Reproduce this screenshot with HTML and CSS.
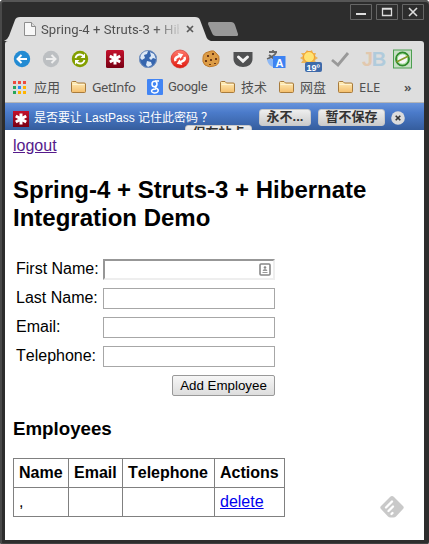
FILE: index.html
```html
<!DOCTYPE html>
<html lang="en">
<head>
<meta charset="utf-8">
<title>Spring-4 + Struts-3 + Hibernate</title>
<link rel="stylesheet" href="styles.css">
</head>
<body>
<svg class="defs" width="0" height="0">
  <defs>
    <linearGradient id="gold" x1="0" y1="0" x2="0" y2="1"><stop offset="0" stop-color="#fff0bd"/><stop offset="1" stop-color="#f4bd6a"/></linearGradient>
    <linearGradient id="red" x1="0" y1="0" x2="0" y2="1"><stop offset="0" stop-color="#c4102c"/><stop offset="1" stop-color="#780014"/></linearGradient>
    <linearGradient id="ball" x1="0" y1="0" x2="0" y2="1"><stop offset="0" stop-color="#ff7a6c"/><stop offset="1" stop-color="#e0190f"/></linearGradient>
    <g id="star" stroke="#fff" stroke-width="3" fill="none"><path d="M0-5.5V5.5M-5.2-3L5.2 3M-5.2 3L5.2-3"/></g>
    <g id="folder" stroke="#a87b3c" fill="url(#gold)"><path d="M.5 11.5V2.5Q.5 1.5 1.5 1.5H5L6.500 3H13Q14.500 3 14.500 4V11.500Q14.500 12.500 13.500 12.500H1.500Q.500 12.500.500 11.500Z"/><path d="M1.500 4.500H13.500" stroke="#fff2cf"/></g>
  </defs>
</svg>
<div class="window">
  <header class="titlebar">
    <div class="tab">
      <svg class="tab-shape" width="207" height="24" viewBox="0 0 207 24"><path d="M0 24Q4 22 5 19L11 3Q12 0 16 0H191Q195 0 196 3L202 19Q203 23 207 24Z" fill="#dedede"/></svg>
      <svg class="doc" width="12" height="14" viewBox="0 0 12 14"><path d="M.5.500H7.500L11.500 4.500V13.500H.500Z" fill="#f8f8f8" stroke="#8e8e8e"/><path d="M7.500.500V4.500H11.500" fill="#ddd" stroke="#8e8e8e"/></svg>
      <span class="tab-title">Spring-4 + Struts-3 + Hib</span>
      <svg class="tab-close" width="8" height="8" viewBox="0 0 8 8"><path d="M1 1L7 7M7 1L1 7" stroke="#595959" stroke-width="1.700"/></svg>
    </div>
    <svg class="newtab" width="31" height="14" viewBox="0 0 31 14"><path d="M1 0H23Q26 0 27 3L30 12Q30.500 14 28 14H8Q5 14 4 11L0 2Q0 0 1 0Z" fill="#999"/></svg>
    <div class="controls">
      <svg width="22" height="16" viewBox="0 0 22 16"><path d="M6 10H16" stroke="#ddd" stroke-width="2"/></svg>
      <svg width="22" height="16" viewBox="0 0 22 16"><path d="M6.500 4.500H15.500V11.500H6.500ZM6 5H16" fill="none" stroke="#ddd" stroke-width="1.300"/></svg>
      <svg width="22" height="16" viewBox="0 0 22 16"><path d="M7 4L15 12M15 4L7 12" stroke="#ddd" stroke-width="1.600"/></svg>
    </div>
  </header>

  <nav class="toolbar">
    <svg viewBox="0 0 24 24"><circle cx="12" cy="12" r="8.200" fill="#238bd3"/><path d="M17 12H8M11.500 8L7.500 12L11.500 16" fill="none" stroke="#fff" stroke-width="2"/></svg>
    <svg viewBox="0 0 24 24"><circle cx="12" cy="12" r="8.200" fill="#bcbfc2"/><path d="M7 12H16M12.500 8L16.500 12L12.500 16" fill="none" stroke="#eee" stroke-width="2"/></svg>
    <svg viewBox="0 0 24 24"><circle cx="12" cy="12" r="8.200" fill="#839f00"/><path d="M7.500 11Q8.500 7.500 12 7.500Q14 7.500 15.500 9M16.500 13Q15.500 16.500 12 16.500Q10 16.500 8.500 15" fill="none" stroke="#fff" stroke-width="1.800"/><path d="M17 6.500V11H12.500ZM7 17.500V13H11.500Z" fill="#fff"/></svg>
    <svg viewBox="0 0 24 24"><rect x="3" y="3" width="18" height="18" rx="1.500" fill="url(#red)"/><use href="#star" x="12" y="12"/></svg>
    <svg viewBox="0 0 24 24"><circle cx="12" cy="12" r="8.800" fill="#3565ae"/><path d="M5 7Q8 3 12 4L11 7L8 8L9 11L6 13L4 11ZM14 5L18 7L20 12L17 11L15 13L13 11L15 9ZM11 14L15 15L16 18L12 20L10 18Z" fill="#dce8f6"/><circle cx="12" cy="12" r="8.500" fill="none" stroke="#7894bf"/></svg>
    <svg viewBox="0 0 24 24"><circle cx="12" cy="12" r="9" fill="url(#ball)" stroke="#ce271e" stroke-width=".6"/><g transform="rotate(-25 12 12)"><path d="M7 12Q7 9 10.500 9H13M17 12Q17 15 13.500 15H11" fill="none" stroke="#fff" stroke-width="2.300"/><path d="M12.500 5.500L17 9L12.500 12ZM11.500 12L7 15L11.500 18.500Z" fill="#fff"/></g></svg>
    <svg viewBox="0 0 24 24"><path d="M12 4Q15 3 17 6Q21 9 20 13Q20 18 15 19Q10 21 6 18Q3 15 4 11Q4 6 9 5Z" fill="#dc9c46" stroke="#c07a2a"/><path d="M8 8H10V10H8ZM13 6H15V8H13ZM6 13H8V15H6ZM11 12H13V14H11ZM16 11H18V13H16ZM10 17H12V18H10ZM15 16H17V17H15Z" fill="#6e3916"/></svg>
    <svg viewBox="0 0 24 24"><path d="M2.500 5H21.500V12C21.500 17 17 20 12 20C7 20 2.500 17 2.500 12Z" fill="#505152"/><path d="M7.500 10L12 14.200L16.500 10" fill="none" stroke="#f2f2f2" stroke-width="3" stroke-linecap="round"/></svg>
    <svg viewBox="0 0 24 24"><path d="M5 5H13M9 3V6M12 6Q9 10 3 12M5 8Q9 12 14 13" fill="none" stroke="#666" stroke-width="1.800"/><path d="M3 13Q7 10 10 13V20Q5 20 3 13Z" fill="#8db8f5"/><rect x="9" y="9" width="12.500" height="12" fill="#3c82f2"/><text x="11.500" y="19.500" class="translate-a">A</text></svg>
    <svg viewBox="0 0 24 24"><path d="M9 3L11 5L14 3L15 6L18 6L17 9L20 11L17 13L18 16H3L5 13L2 11L5 9L3 6L7 6Z" fill="#eab457"/><circle cx="11" cy="10" r="5.500" fill="#ffe374" stroke="#f49c28"/><rect x="7" y="15" width="17" height="10" rx="2" fill="#3e6aaa"/><text x="8.500" y="23.500" class="temperature">19º</text></svg>
    <svg viewBox="0 0 24 24"><path d="M4 13L10 18L20 6" fill="none" stroke="#999" stroke-width="2.800"/></svg>
    <svg viewBox="0 0 24 24"><text x="3" y="19" class="jb"><tspan fill="#e2c8ae">J</tspan><tspan fill="#b0cbdc">B</tspan></text></svg>
    <svg viewBox="0 0 24 24"><rect x="3.500" y="3" width="18" height="18" fill="#c8dfc6" stroke="#4c9f50"/><circle cx="12.500" cy="12" r="6.500" fill="#f7f7f7" stroke="#2f8a2c" stroke-width="1.800"/><circle cx="12.500" cy="12" r="5.200" fill="none" stroke="#7cd070" stroke-width=".8"/><path d="M6.500 15L18.500 9" stroke="#8a9a2a" stroke-width="1.800"/></svg>
  </nav>

  <nav class="bookmarks">
    <svg class="apps" width="13" height="13" viewBox="0 0 13 13"><path d="M0 0H3V3H0ZM5 0H8V3H5ZM10 0H13V3H10Z" fill="#ed4b3c"/><path d="M0 5H3V8H0ZM0 10H3V13H0Z" fill="#26a65b"/><path d="M5 5H8V8H5Z" fill="#2889f4"/><path d="M10 5H13V8H10ZM5 10H8V13H5ZM10 10H13V13H10Z" fill="#ffb400"/></svg><span class="bm-apps">应用</span>
    <svg width="15" height="14"><use href="#folder"/></svg><span class="bm-info">GetInfo</span>
    <svg class="google" width="16" height="16" viewBox="0 0 16 16"><rect width="16" height="16" rx="1" fill="#4285f4"/><ellipse cx="7.500" cy="5" rx="2.500" ry="2.800" fill="none" stroke="#fff" stroke-width="1.500"/><path d="M8 2H12M9 7Q7 8 9 9Q12 10.500 11 12.500Q9.500 14.500 6.500 13.800Q3.500 13 5 11Q6 10 9 10" fill="none" stroke="#fff" stroke-width="1.400"/></svg><span class="bm-google">Google</span>
    <svg width="15" height="14"><use href="#folder"/></svg><span class="bm-tech">技术</span>
    <svg width="15" height="14"><use href="#folder"/></svg><span class="bm-disk">网盘</span>
    <svg width="15" height="14"><use href="#folder"/></svg><span class="bm-ele">ELE</span>
    <span class="more">»</span>
  </nav>

  <div class="notice">
    <svg class="lp" width="16" height="16" viewBox="0 0 16 16"><rect width="16" height="16" fill="url(#red)"/><use href="#star" x="8" y="8"/></svg>
    <span class="question">是否要让 LastPass 记住此密码<span class="mark">？</span></span>
    <span class="nbtn never">永不...</span>
    <span class="nbtn later">暂不保存</span>
    <svg class="dismiss" width="14" height="14" viewBox="0 0 14 14"><circle cx="7" cy="7" r="6.800" fill="#dcdcdc"/><path d="M4.700 4.700L9.300 9.300M9.300 4.700L4.700 9.300" stroke="#333" stroke-width="1.600"/></svg>
    <span class="nbtn overflow">保存站点</span>
  </div>

  <main>
    <a class="logout" href="#">logout</a>
    <h2>Spring-4 + Struts-3 + Hibernate<br>Integration Demo</h2>
    <form class="form">
      <label>First Name:</label><div class="field active"><svg width="12" height="13" viewBox="0 0 12 13"><rect x="1" y="1" width="10" height="11" rx="1" fill="#fff" stroke="#888" stroke-width="1.600"/><circle cx="6" cy="4.500" r="1.300" fill="#888"/><path d="M3.500 8Q4 6 6 6Q8 6 8.500 8ZM3.500 9H8.500V10H3.500Z" fill="#999"/></svg></div>
      <label>Last Name:</label><div class="field"></div>
      <label>Email:</label><div class="field"></div>
      <label>Telephone:</label><div class="field"></div>
      <button type="button">Add Employee</button>
    </form>
    <h3>Employees</h3>
    <table>
      <colgroup><col class="c-name"><col class="c-email"><col class="c-phone"><col class="c-actions"></colgroup>
      <tr><th>Name</th><th>Email</th><th>Telephone</th><th>Actions</th></tr>
      <tr><td>,</td><td></td><td></td><td><a href="#">delete</a></td></tr>
    </table>
    <svg class="feedly" width="24" height="22" viewBox="0 0 24 22"><path d="M10 1Q12-1 14 1L23 10Q24.500 11.500 23 13L16 20.500Q15 21.500 13.500 21.500H10.500Q9 21.500 8 20.500L1 13Q-.5 11.500 1 10Z" fill="#c9c9c9"/><path d="M6 11.500L12 5.500M8.500 15L13 10.500M11.500 18L12.500 17" stroke="#fff" stroke-width="2.300" stroke-linecap="round"/></svg>
  </main>
</div>
</body>
</html>
```
FILE: styles.css
```css
* { box-sizing: border-box; }
body { margin: 0; width: 429px; height: 544px; overflow: hidden; background: #fff; font-family: "Liberation Sans", "Noto Sans CJK SC", sans-serif; }
.defs { position: absolute; }
svg { display: block; flex: none; }
.window { width: 429px; height: 544px; padding: 0 4px 4px; background: #2d2d2d; border-radius: 4px 4px 2px 2px; box-shadow: inset 0 2px #565656, inset 2px 0 #494949, inset 0 -1px #414141; }
.titlebar { height: 41px; display: flex; align-items: flex-start; }
.tab { position: relative; width: 207px; height: 24px; margin-top: 17px; display: flex; padding: 5px 0 0 20px; }
.tab-shape { position: absolute; inset: 0; }
.doc, .tab-title, .tab-close { position: relative; }
.tab-title { width: 138px; height: 18px; margin-left: 5px; font: 13.1px/15px Roboto, sans-serif; letter-spacing: .05px; color: #505050; white-space: nowrap; -webkit-mask-image: linear-gradient(90deg, #000 113px, transparent 142px); }
.tab-close { margin: 3px 0 0 7px; }
.newtab { margin: 22px 0 0 -3px; }
.controls { display: flex; gap: 4px; margin: 4px 0 0 111px; }
.controls svg { box-shadow: inset 0 0 0 1px #666; border-radius: 1px; }
.toolbar { height: 32px; margin: 0 1px; padding: 6px 0 0 5px; display: grid; grid-template-columns: 29px 29px 35px 33px 32px 31px 32px 33px 34px 30px 31px 31px 24px; background: #dedede; border-radius: 3px 3px 0 0; }
.toolbar svg { width: 24px; height: 24px; overflow: visible; }
.translate-a { font: bold 11px "Liberation Sans", sans-serif; fill: #fff; }
.temperature { font: bold 9px "Liberation Sans", sans-serif; fill: #fff; }
.jb { font: bold 20px "Liberation Sans", sans-serif; letter-spacing: -1.5px; }
.bookmarks { height: 30px; margin: 0 1px; padding: 0 0 1px 8px; display: flex; align-items: center; background: #dedede; border-bottom: 1px solid #b5b5b5; font: 13px/16px "Noto Sans", "Noto Sans CJK SC", sans-serif; color: #505050; white-space: nowrap; }
.bookmarks span { flex: none; }
.bm-apps { width: 45px; padding-left: 8px; }
.bm-info { width: 61px; padding-left: 6px; letter-spacing: -.4px; }
.bm-google { width: 57px; padding-left: 5px; font-family: Roboto, sans-serif; letter-spacing: -.3px; }
.bm-tech, .bm-disk { width: 44px; padding-left: 6px; }
.bm-ele { width: 51px; padding-left: 6px; }
.more { font-weight: 600; }
.notice { position: relative; height: 27px; margin: 0 1px; padding: 5px 0 0 8px; display: flex; overflow: hidden; background: linear-gradient(#6793dc, #4b7bca 35%, #355d9d); color: #fff; }
.lp { margin-top: 3px; }
.question { width: 225px; margin-left: 5px; font-size: 12px; line-height: 20px; white-space: nowrap; }
.mark { margin-left: 3px; }
.nbtn { height: 17px; border: 1px solid #c8c8c8; border-radius: 3px; background: linear-gradient(#eee, #ccc); color: #333; font: bold 13px/14px "Liberation Sans", "Noto Sans CJK SC", sans-serif; text-align: center; white-space: nowrap; }
.never { width: 52px; margin: 1px 7px 0 0; }
.later { width: 67px; margin: 1px 6px 0 0; }
.dismiss { margin-top: 3px; }
.overflow { position: absolute; left: 180px; top: 22px; width: 67px; }
main { position: relative; height: 410px; margin: 0 1px; padding: 7px 8px 0; background: #fff; color: #000; font-size: 16px; line-height: 18px; font-kerning: none; }
.logout { display: block; width: 44px; color: #551a8b; }
h2 { margin: 21px 0 0; font-size: 24px; line-height: 28px; white-space: nowrap; }
.form { margin: 27px 0 0; padding-left: 3px; width: 262px; display: grid; grid-template-columns: 87px 172px; row-gap: 8px; }
.form label { line-height: 19px; height: 21px; white-space: nowrap; }
.field { height: 21px; border: 1px solid #a7a7a7; background: #fff; }
.active { border: 2px solid; border-color: #979797 #eee #eee #979797; display: flex; justify-content: flex-end; padding: 2px 2px 0 0; }
button { grid-column: 2; justify-self: end; width: 103px; height: 21px; padding: 0; border: 1px solid #999; border-radius: 2px; background: linear-gradient(#f6f6f6, #ddd); font: 13.33px/19px "Liberation Sans", sans-serif; color: #000; white-space: nowrap; }
h3 { margin: 22px 0 0; font-size: 18.72px; line-height: 22px; }
table { width: 272px; margin: 18px 0 0; border-collapse: collapse; table-layout: fixed; }
.c-name { width: 55px; }
.c-email { width: 54px; }
.c-phone { width: 92px; }
.c-actions { width: 70px; }
th, td { padding: 5px; border: 1px solid #808080; height: 29px; text-align: left; line-height: 18px; white-space: nowrap; }
td a { color: #00e; }
.feedly { position: absolute; right: 20px; bottom: 22px; }
```
